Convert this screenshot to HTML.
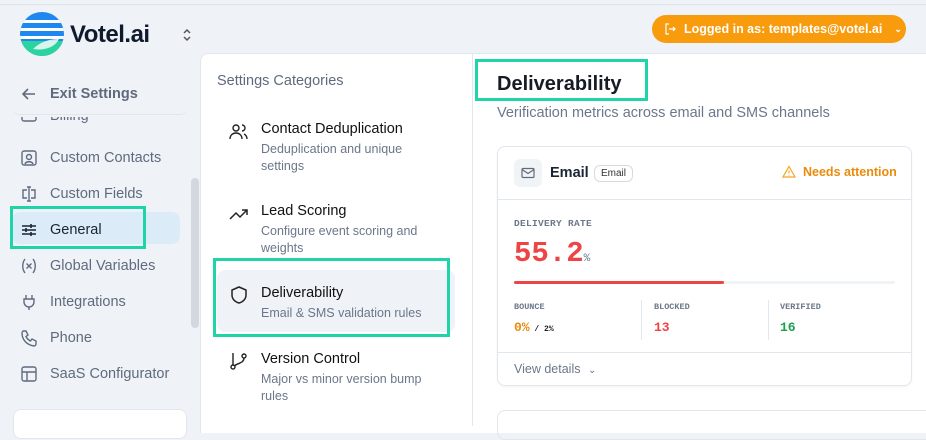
<!DOCTYPE html>
<html><head><meta charset="utf-8"><style>
*{box-sizing:border-box;margin:0;padding:0}
body{width:926px;height:426px;overflow:hidden;background:#eff3f8;font-family:"Liberation Sans",sans-serif;position:relative}
.abs{position:absolute}
.topline{left:0;top:4px;width:926px;height:1px;background:#dde3ea}
.nav{left:20px;font-size:14.5px;color:#5f6b7d;display:flex;align-items:center}
.nav svg{width:18px;height:18px;margin-right:12px}
.cat-t{font-size:14.5px;color:#111;font-weight:500}
.cat-d{font-size:12.5px;color:#6b778a;line-height:17px;margin-top:4px}
.mono{font-family:"Liberation Mono",monospace}
</style></head><body>
<div class="abs topline"></div>
<svg class="abs" style="left:19px;top:11px" width="46" height="46" viewBox="0 0 46 46">
<defs><clipPath id="c"><circle cx="23" cy="23" r="22"/></clipPath></defs>
<g clip-path="url(#c)">
<rect width="46" height="46" fill="#1e88f0"/>
<rect y="9" width="46" height="3" fill="#fff"/>
<rect y="17" width="46" height="3" fill="#fff"/>
<rect y="25" width="46" height="3" fill="#fff"/>
<path d="M0 30 L46 30 L46 46 L0 46Z" fill="#2bd3a0"/>
<path d="M14 38 C22 30 32 28 40 28 C36 36 26 40 14 38Z" fill="#fff" opacity=".8"/>
</g></svg>
<div class="abs" style="left:70px;top:21px;font-size:24px;font-weight:700;color:#0f1a2c;letter-spacing:-0.5px">Votel.ai</div>
<svg class="abs" style="left:181px;top:27px" width="12" height="16" viewBox="0 0 12 16"><path d="M3 6l3-3 3 3M3 10l3 3 3-3" stroke="#555" stroke-width="1.5" fill="none"/></svg>
<div class="abs" style="left:652px;top:15px;width:254px;height:28px;border-radius:14px;background:#f89b0d;color:#fff;font-size:12.5px;font-weight:700;display:flex;align-items:center;padding-left:12px">
<svg width="12" height="12" viewBox="0 0 12 12" style="margin-right:8px"><path d="M5 1H2v10h3M5 6h6M9 4l2 2-2 2" stroke="#fff" stroke-width="1.2" fill="none"/></svg>Logged in as: templates@votel.ai<span style="margin-left:12px;font-size:9px">⌄</span></div>
<div class="abs" style="left:12px;top:74px;width:176px;height:41px;border-bottom:1px solid #e2e7ee;border-radius:0 0 8px 8px"></div>
<div class="abs nav" style="top:85px;font-weight:700"><svg viewBox="0 0 18 18"><path d="M15 9H3M8 4L3 9l5 5" stroke="#5f6b7d" stroke-width="1.6" fill="none"/></svg>Exit Settings</div>
<div class="abs" style="left:12px;top:117px;width:178px;height:283px;overflow:hidden">
<div class="abs nav" style="left:8px;top:-10px"><svg viewBox="0 0 18 18"><rect x="2" y="2" width="14" height="12" rx="2" stroke="#5f6b7d" stroke-width="1.4" fill="none"/></svg>Billing</div>
</div>
<div class="abs nav" style="top:149px"><svg viewBox="0 0 18 18"><rect x="2" y="2" width="14" height="14" rx="2" stroke="#5f6b7d" stroke-width="1.4" fill="none"/><circle cx="9" cy="8" r="2.5" stroke="#5f6b7d" stroke-width="1.4" fill="none"/><path d="M5 15c1-3 7-3 8 0" stroke="#5f6b7d" stroke-width="1.4" fill="none"/></svg>Custom Contacts</div>
<div class="abs nav" style="top:185px"><svg viewBox="0 0 18 18"><path d="M7 5H3v8h4M11 5h4v8h-4M9 2v14M7 2h4M7 16h4" stroke="#5f6b7d" stroke-width="1.4" fill="none"/></svg>Custom Fields</div>
<div class="abs" style="left:12px;top:212px;width:168px;height:32px;background:#dcebf8;border-radius:8px"></div>
<div class="abs" style="left:10px;top:206px;width:136px;height:43px;border:3px solid #1fd4a8"></div>
<div class="abs nav" style="top:221px;color:#1b2433"><svg viewBox="0 0 18 18"><path d="M2 5h14M2 9h14M2 13h14" stroke="#1b2433" stroke-width="1.4"/><path d="M11 3v4M6 7v4M11 11v4" stroke="#1b2433" stroke-width="1.6"/></svg>General</div>
<div class="abs nav" style="top:257px"><svg viewBox="0 0 18 18"><path d="M5 2c-3 4-3 10 0 14M13 2c3 4 3 10 0 14M6.5 6.5l5 5M11.5 6.5l-5 5" stroke="#5f6b7d" stroke-width="1.4" fill="none"/></svg>Global Variables</div>
<div class="abs nav" style="top:293px"><svg viewBox="0 0 18 18"><path d="M6 2v4M12 2v4M4 6h10v3a5 5 0 01-10 0zM9 14v3" stroke="#5f6b7d" stroke-width="1.4" fill="none"/></svg>Integrations</div>
<div class="abs nav" style="top:329px"><svg viewBox="0 0 18 18"><path d="M3 2h3l2 4-2 1.5c1 2 2.5 3.5 4.5 4.5L12 10l4 2v3c0 1-1 2-2 2C7 16 2 11 2 4c0-1 1-2 1-2z" stroke="#5f6b7d" stroke-width="1.4" fill="none"/></svg>Phone</div>
<div class="abs nav" style="top:365px"><svg viewBox="0 0 18 18"><rect x="2" y="2" width="14" height="14" rx="2" stroke="#5f6b7d" stroke-width="1.4" fill="none"/><path d="M2 7h14M7 7v9" stroke="#5f6b7d" stroke-width="1.4"/></svg>SaaS Configurator</div>
<div class="abs" style="left:191px;top:178px;width:8px;height:150px;background:#d3d8df;border-radius:4px"></div>
<div class="abs" style="left:13px;top:409px;width:174px;height:30px;background:#fff;border:1px solid #e2e7ee;border-radius:8px"></div>
<div class="abs" style="left:200px;top:53px;width:726px;height:380px;background:#fff;border-top:1px solid #e2e7ee;border-left:1px solid #e2e7ee;border-radius:8px 0 0 0"></div>
<div class="abs" style="left:472px;top:54px;width:1px;height:372px;background:#e2e7ee"></div>
<div class="abs" style="left:217px;top:73px;font-size:14.5px;color:#5f6b7d">Settings Categories</div>
<svg class="abs" style="left:229px;top:122px" width="20" height="20" viewBox="0 0 20 20"><circle cx="7" cy="6" r="3" stroke="#222" stroke-width="1.4" fill="none"/><path d="M1 17c0-4 3-6 6-6s6 2 6 6M13 3a3 3 0 010 6M15 12c2 1 3 3 3 5" stroke="#222" stroke-width="1.4" fill="none"/></svg>
<div class="abs" style="left:261px;top:121px"><div class="cat-t">Contact Deduplication</div><div class="cat-d">Deduplication and unique<br>settings</div></div>
<svg class="abs" style="left:229px;top:204px" width="20" height="20" viewBox="0 0 20 20"><path d="M1 15l6-6 4 4 7-7M13 6h5v5" stroke="#222" stroke-width="1.5" fill="none"/></svg>
<div class="abs" style="left:261px;top:203px"><div class="cat-t">Lead Scoring</div><div class="cat-d">Configure event scoring and<br>weights</div></div>
<div class="abs" style="left:217px;top:270px;width:238px;height:62px;background:#eff2f6;border-radius:8px"></div>
<div class="abs" style="left:213px;top:258px;width:237px;height:79px;border:3px solid #1fd4a8"></div>
<svg class="abs" style="left:229px;top:285px" width="20" height="20" viewBox="0 0 20 20"><path d="M10 2l7 3v5c0 4-3 7-7 8-4-1-7-4-7-8V5z" stroke="#222" stroke-width="1.5" fill="none"/></svg>
<div class="abs" style="left:261px;top:285px"><div class="cat-t">Deliverability</div><div class="cat-d">Email &amp; SMS validation rules</div></div>
<svg class="abs" style="left:229px;top:351px" width="20" height="20" viewBox="0 0 20 20"><circle cx="4" cy="16" r="2" stroke="#222" stroke-width="1.4" fill="none"/><circle cx="15" cy="5" r="2" stroke="#222" stroke-width="1.4" fill="none"/><path d="M4 2v12M15 7c0 5-6 5-10 8" stroke="#222" stroke-width="1.4" fill="none"/></svg>
<div class="abs" style="left:261px;top:351px"><div class="cat-t">Version Control</div><div class="cat-d">Major vs minor version bump<br>rules</div></div>
<div class="abs" style="left:475px;top:59px;width:173px;height:42px;border:3px solid #1fd4a8"></div>
<div class="abs" style="left:497px;top:73px;font-size:20px;font-weight:700;color:#161b24">Deliverability</div>
<div class="abs" style="left:497px;top:105px;font-size:14.5px;color:#6b778a">Verification metrics across email and SMS channels</div>
<div class="abs" style="left:497px;top:146px;width:415px;height:240px;border:1px solid #e2e7ee;border-radius:8px;box-shadow:0 1px 2px rgba(0,0,0,.05)"></div>
<div class="abs" style="left:514px;top:159px;width:28px;height:28px;background:#f1f4f7;border-radius:6px"></div>
<svg class="abs" style="left:521px;top:166px" width="14" height="14" viewBox="0 0 14 14"><rect x="1" y="2.5" width="12" height="9" rx="1" stroke="#5f6b7d" stroke-width="1.2" fill="none"/><path d="M1 3.5l6 4 6-4" stroke="#5f6b7d" stroke-width="1.2" fill="none"/></svg>
<div class="abs" style="left:550px;top:165px;font-size:14.5px;font-weight:700;color:#1b2433">Email</div>
<div class="abs" style="left:594px;top:165px;height:17px;padding:0 6px;border:1px solid #d6dbe2;border-radius:6px;font-size:10px;line-height:15px;color:#333">Email</div>
<svg class="abs" style="left:782px;top:165px" width="14" height="14" viewBox="0 0 14 14"><path d="M7 1.5l6 10.5H1z" stroke="#f5a524" stroke-width="1.2" fill="none"/><path d="M7 5.5v3M7 10v.6" stroke="#f5a524" stroke-width="1.2"/></svg>
<div class="abs" style="left:803px;top:165px;font-size:12.5px;font-weight:700;color:#ea8b0c">Needs attention</div>
<div class="abs" style="left:498px;top:199px;width:413px;height:1px;background:#e2e7ee"></div>
<div class="abs mono" style="left:514px;top:218px;font-size:9.5px;color:#6b778a;letter-spacing:.3px;font-weight:700">DELIVERY RATE</div>
<div class="abs mono" style="left:514px;top:237px;font-size:29px;color:#ef4444;font-weight:700">55.2<span style="font-size:11px;color:#6b778a;font-weight:400">%</span></div>
<div class="abs" style="left:514px;top:281px;width:381px;height:3px;background:#f1f4f7;border-radius:2px"></div>
<div class="abs" style="left:514px;top:281px;width:210px;height:3px;background:#ef4444;border-radius:2px"></div>
<div class="abs mono" style="left:514px;top:302px;font-size:8.5px;color:#6b778a;font-weight:700">BOUNCE</div>
<div class="abs mono" style="left:514px;top:320px;font-size:13px;color:#ea8b0c;font-weight:700">0%<span style="font-size:8px;color:#222"> / 2%</span></div>
<div class="abs" style="left:641px;top:300px;width:1px;height:40px;background:#e2e7ee"></div>
<div class="abs mono" style="left:654px;top:302px;font-size:8.5px;color:#6b778a;font-weight:700">BLOCKED</div>
<div class="abs mono" style="left:654px;top:320px;font-size:13px;color:#ef4444;font-weight:700">13</div>
<div class="abs" style="left:768px;top:300px;width:1px;height:40px;background:#e2e7ee"></div>
<div class="abs mono" style="left:780px;top:302px;font-size:8.5px;color:#6b778a;font-weight:700">VERIFIED</div>
<div class="abs mono" style="left:780px;top:320px;font-size:13px;color:#16a34a;font-weight:700">16</div>
<div class="abs" style="left:498px;top:352px;width:413px;height:1px;background:#e2e7ee"></div>
<div class="abs" style="left:514px;top:362px;font-size:12.5px;color:#6b778a">View details <span style="font-size:10px;margin-left:4px">⌄</span></div>
<div class="abs" style="left:497px;top:410px;width:440px;height:30px;border:1px solid #e2e7ee;border-radius:8px"></div>
</body></html>
